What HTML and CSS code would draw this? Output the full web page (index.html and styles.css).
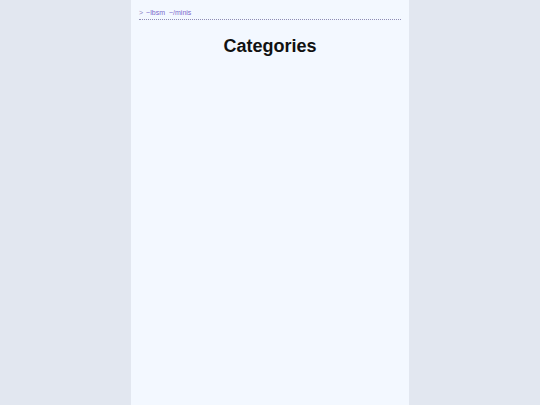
FILE: index.html
```html
<!DOCTYPE html>
<html>
<head>
<meta charset="utf-8">
<link rel="stylesheet" href="styles.css">
</head>
<body>
<div class="page">
  <header class="bar">
    <span class="prompt">&gt;</span>
    <span class="user">~lbsm</span>
    <span class="path">~/minis</span>
  </header>
  <h1 class="title">Categories</h1>
</div>
</body>
</html>
```

FILE: styles.css
```css
html, body {
  margin: 0;
  padding: 0;
  height: 100%;
}
body {
  background: #e2e7f0;
  font-family: "Liberation Sans", Arial, sans-serif;
}
.page {
  width: 262px;
  margin: 0 auto;
  min-height: 405px;
  background: #f3f8ff;
  padding: 0 8px;
  box-sizing: content-box;
}
.bar {
  display: flex;
  gap: 3px;
  padding-top: 8px;
  padding-bottom: 2px;
  font-size: 7px;
  line-height: 9px;
  color: #7a68cc;
  border-bottom: 1px dotted #8e8cb4;
}
.prompt {
  color: #8f86c2;
  margin-right: 0;
}
.user {
  margin-right: 1px;
}
.title {
  margin: 15px 0 0;
  text-align: center;
  font-size: 18px;
  line-height: 22px;
  font-weight: bold;
  color: #111;
}
```
